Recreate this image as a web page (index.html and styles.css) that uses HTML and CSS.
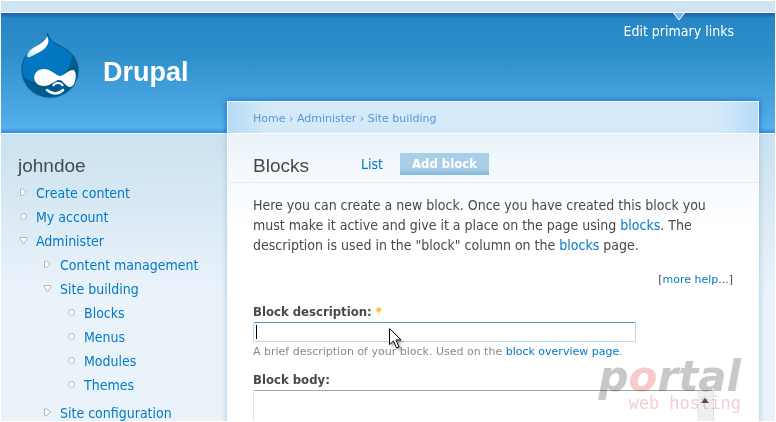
FILE: index.html
```html
<!DOCTYPE html>
<html lang="en">
<head>
<meta charset="utf-8" />
<title>Blocks | Drupal</title>
<link rel="stylesheet" href="styles.css">
</head>
<body>
<svg class="defs" width="0" height="0" aria-hidden="true">
  <symbol id="collapsed" viewBox="0 0 9 9"><path d="M1.5 1 L3.5 1 L7.5 4 L3.5 7.5 L1.5 7.5 Z" /></symbol>
  <symbol id="expanded" viewBox="0 0 9 9"><path d="M1 1.5 L8 1.5 L8 2.5 L5 7.5 L4 7.5 L1 2.5 Z" /></symbol>
  <symbol id="leaf" viewBox="0 0 9 9"><circle cx="4.5" cy="4.5" r="3" /></symbol>
</svg>

<div class="page">
  <div class="top-strip"></div>
  <div class="container">

    <div class="sidebar">
      <div class="brand">
        <svg class="logo" viewBox="0 0 60 68" aria-hidden="true">
          <defs>
            <linearGradient id="shine" x1="0" y1="1" x2="1" y2="0">
              <stop offset="0" stop-color="#b9dcf0" />
              <stop offset=".4" stop-color="#fff" />
            </linearGradient>
            <clipPath id="drop"><path d="M27.500 1 C29 8 34 10.500 41 14.500 C51 20 58 27 58 38 C58 54 45 65 30 65 C14 65 2 53 2 37 C2 26 8 20 15 15 C21 11 27 8 27.500 1 Z" /></clipPath>
          </defs>
          <ellipse class="drop-shadow" cx="30" cy="39" rx="29" ry="28" />
          <g clip-path="url(#drop)">
            <rect width="60" height="68" fill="#0077c0" />
            <path d="M52 20 C53 34 45 45 32 49 C22 52 10 51 3 44 L0 68 L60 68 L60 20 Z" fill="#005a8c" />
          </g>
          <path d="M27.500 1 C29 8 34 10.500 41 14.500 C51 20 58 27 58 38 C58 54 45 65 30 65 C14 65 2 53 2 37 C2 26 8 20 15 15 C21 11 27 8 27.500 1 Z" fill="none" stroke="#00598e" />
          <path d="M27 4 C29 8 29 11 26 15 C22 20 15 22 10 25 C7 26 6 24 8 21 C13 13 24 13 27 4 Z" fill="url(#shine)" />
          <path d="M24 37 C31 37 35 43 40 44 C45 43 48 38 53 38 C58 39 56 55 50 55 C46 55 43 48 39 48 C35 48 31 54 24 54 C11 54 11 37 24 37 Z" fill="#fff" />
          <path d="M33 54 C35 50 41 50 43 54" fill="none" stroke="#fff" stroke-width="2" />
          <path d="M27 58 C33 63 39 62 43 58" fill="none" stroke="#fff" stroke-width="2.500" stroke-linecap="round" />
        </svg>
        <h1 class="site-name">Drupal</h1>
      </div>
      <h2 class="user-name">johndoe</h2>
      <ul class="menu">
        <li><svg class="bullet"><use href="#collapsed" /></svg><a href="#">Create content</a></li>
        <li><svg class="bullet"><use href="#leaf" /></svg><a href="#">My account</a></li>
        <li><svg class="bullet"><use href="#expanded" /></svg><a href="#">Administer</a>
          <ul>
            <li><svg class="bullet"><use href="#collapsed" /></svg><a href="#">Content management</a></li>
            <li><svg class="bullet"><use href="#expanded" /></svg><a href="#">Site building</a>
              <ul>
                <li><svg class="bullet"><use href="#leaf" /></svg><a href="#">Blocks</a></li>
                <li><svg class="bullet"><use href="#leaf" /></svg><a href="#">Menus</a></li>
                <li><svg class="bullet"><use href="#leaf" /></svg><a href="#">Modules</a></li>
                <li><svg class="bullet"><use href="#leaf" /></svg><a href="#">Themes</a></li>
              </ul>
            </li>
            <li><svg class="bullet"><use href="#collapsed" /></svg><a href="#">Site configuration</a></li>
          </ul>
        </li>
      </ul>
    </div>

    <div class="center">
      <div class="primary-links">
        <a href="#">
          <svg class="marker" viewBox="0 0 12 8" aria-hidden="true"><path d="M0.500 0 L6 7 L11.500 0" /></svg>
          Edit primary links
        </a>
      </div>
      <div class="breadcrumb"><a href="#">Home</a> › <a href="#">Administer</a> › <a href="#">Site building</a></div>
      <div class="content">
        <div class="title-row">
          <h2>Blocks</h2>
          <a class="tab" href="#">List</a>
          <a class="tab active" href="#">Add block</a>
        </div>
        <div class="main">
          <p class="help">Here you can create a new block. Once you have created this block you must make it active and give it a place on the page using <a href="#">blocks</a>. The description is used in the "block" column on the <a href="#">blocks</a> page.</p>
          <p class="more-help">[<a href="#">more help...</a>]</p>
          <form>
            <label for="info">Block description: <span class="required">*</span></label>
            <div class="field">
              <input type="text" id="info" />
              <span class="caret"></span>
              <svg class="pointer" viewBox="0 0 13 21" aria-hidden="true"><path d="M0.500 0.500 V16.500 L4.500 13 L7.500 20 L10 19 L7 12 H12 Z" /></svg>
            </div>
            <p class="description">A brief description of your block. Used on the <a href="#">block overview page</a>.</p>
            <label for="body">Block body:</label>
            <div class="body-field">
              <textarea id="body" rows="10"></textarea>
              <div class="scroll-track"><svg viewBox="0 0 8 5" aria-hidden="true"><path d="M0 5 L4 0 L8 5 Z" /></svg></div>
            </div>
          </form>
        </div>
      </div>
    </div>
  </div>

  <div class="watermark">
    <div class="portal">p<span>o</span>rtal</div>
    <div class="hosting">web hosting</div>
  </div>
</div>
</body>
</html>
```
FILE: styles.css
```css
* {
  box-sizing: border-box;
}
body {
  margin: 0;
  background: #fff;
  font-family: 'DejaVu Sans Condensed', Verdana, sans-serif;
  font-size: 14px;
  line-height: 20px;
  color: #494949;
}
h1, h2, p, ul {
  margin: 0;
  padding: 0;
}
h2 {
  font: 19px/24px Helvetica, 'Liberation Sans', sans-serif;
}
a {
  color: #027ac6;
  text-decoration: none;
}
.defs {
  position: absolute;
}
.page {
  position: relative;
  height: 100vh;
  overflow: hidden;
  border: 1px solid #fff;
}
.top-strip {
  height: 12px;
  background: #cee4f0;
  border-bottom: 1px solid #fff;
}
.container {
  display: flex;
  min-height: 100%;
  background:
    linear-gradient(#1d5fae, rgba(33, 110, 185, 0)) 0 0 / 100% 5px no-repeat,
    linear-gradient(rgba(40, 130, 220, 0), #2f8be0) 0 115px / 100% 5px no-repeat,
    linear-gradient(#2385c2, #2f8fcb 35%, #57b2ec) 0 0 / 100% 120px no-repeat,
    linear-gradient(#fff, #fff) 0 120px / 100% 1px no-repeat,
    linear-gradient(#cae1ef, #ebf3fa) 0 121px / 100% 160px no-repeat,
    #ebf3fa;
}

/* left column */
.sidebar {
  width: 226px;
  flex: none;
  padding-left: 17px;
}
.brand {
  display: flex;
  align-items: center;
  height: 121px;
}
.logo {
  width: 62px;
  height: 68px;
  margin: 0 22px 16px 1px;
}
.drop-shadow {
  fill: rgba(0, 60, 120, .15);
}
.site-name {
  margin-bottom: 3px;
  font: bold 27px/32px Helvetica, 'Liberation Sans', sans-serif;
  color: #fff;
}
.user-name {
  margin: 20px 0 3px;
}
.menu, .menu ul {
  list-style: none;
}
.menu li {
  position: relative;
  padding: 2px 0 2px 18px;
}
.menu li li {
  padding-left: 24px;
}
.menu ul {
  margin-left: -18px;
  padding: 2px 0 2px 18px;
}
.menu ul ul {
  margin: 0;
  padding-left: 0;
}
.bullet {
  position: absolute;
  left: 1px;
  top: 7px;
  width: 9px;
  height: 9px;
  fill: #fff;
  stroke: #b4b4b4;
}
.menu li li > .bullet {
  left: 7px;
}

/* right column */
.center {
  flex: 1;
  min-width: 0;
  margin-right: 16px;
  display: flex;
  flex-direction: column;
}
.primary-links {
  height: 88px;
  padding-right: 25px;
  text-align: right;
}
.primary-links a {
  display: inline-block;
  color: #fff;
}
.marker {
  display: block;
  width: 12px;
  height: 8px;
  margin: 0 auto;
  fill: #7fb4dc;
  stroke: #fff;
}
.breadcrumb {
  height: 33px;
  padding: 7px 25px;
  border: 1px solid #fff;
  background: linear-gradient(90deg, #b5dbf6, #d4eaf9 40px, #d4eaf9 calc(100% - 40px), #b5dbf6);
  box-shadow: 0 0 6px #0f62d0;
  clip-path: inset(-8px -8px 0 -8px);
  font-family: 'DejaVu Sans', Verdana, sans-serif;
  font-size: 11px;
  color: #5698cf;
}
.breadcrumb a {
  color: #5698dc;
}
.content {
  flex: 1;
  border-left: 1px solid #fff;
  border-right: 1px solid #fff;
  background: linear-gradient(#eaf2f9, #f7fbfe 50px, #fff 100px);
  box-shadow: 0 0 6px #9cc4de;
  clip-path: inset(0 -8px 0 -8px);
}
.title-row {
  display: flex;
  align-items: flex-end;
  height: 49px;
  padding: 0 25px 4px;
  border-bottom: 1px solid #e7eef2;
}
.title-row h2 {
  margin-right: 40px;
}
.tab {
  padding: 1px 12px;
  margin: 0 5px 3px 0;
}
.tab.active {
  background: linear-gradient(#a9cfe8 70%, #85b8dc);
  color: #fff;
  font-size: 13px;
  font-weight: bold;
}
.main {
  padding: 12px 25px;
}
.more-help {
  padding: 15px 0 12px;
  font-family: 'DejaVu Sans', Verdana, sans-serif;
  font-size: 11px;
  text-align: right;
}
label {
  display: block;
  font-size: 13px;
  font-weight: bold;
}
.required {
  color: #ffae00;
}
.field {
  position: relative;
  max-width: 383px;
}
.field input {
  display: block;
  width: 100%;
  height: 20px;
  padding: 1px 4px;
  background: #fff;
  border: 1px solid #b9d6ea;
  border-top-color: #5794bf;
  border-radius: 2px;
  outline: none;
}
.caret {
  position: absolute;
  left: 3px;
  top: 3px;
  width: 1px;
  height: 14px;
  background: #000;
}
.pointer {
  position: absolute;
  left: 136px;
  top: 6px;
  width: 13px;
  height: 21px;
  fill: #fff;
  stroke: #000;
  filter: drop-shadow(2px 2px 1px rgba(0, 0, 0, .3));
}
.description {
  margin-bottom: 8px;
  font-family: 'DejaVu Sans', Verdana, sans-serif;
  font-size: 11px;
  color: #898989;
}
.body-field {
  display: flex;
  width: 96%;
  border: 1px solid #dde1e8;
  border-top-color: #a3a4a9;
  border-radius: 2px;
}
.body-field textarea {
  flex: 1;
  border: 0;
  resize: none;
  outline: none;
  overflow: hidden;
}
.scroll-track {
  width: 16px;
  padding: 7px 4px;
  background: #efefef;
}
.scroll-track svg {
  display: block;
  width: 8px;
  height: 5px;
  fill: #555;
}

/* hosting mark in the corner */
.watermark {
  position: absolute;
  right: 34px;
  bottom: 10px;
  text-align: right;
  mix-blend-mode: multiply;
}
.portal {
  font: italic bold 42px/36px 'DejaVu Sans', sans-serif;
  color: #c8c8c8;
}
.portal span {
  color: #fac9cb;
}
.hosting {
  font: 17px/16px 'DejaVu Sans Mono', monospace;
  color: #f5cfd2;
}
```
